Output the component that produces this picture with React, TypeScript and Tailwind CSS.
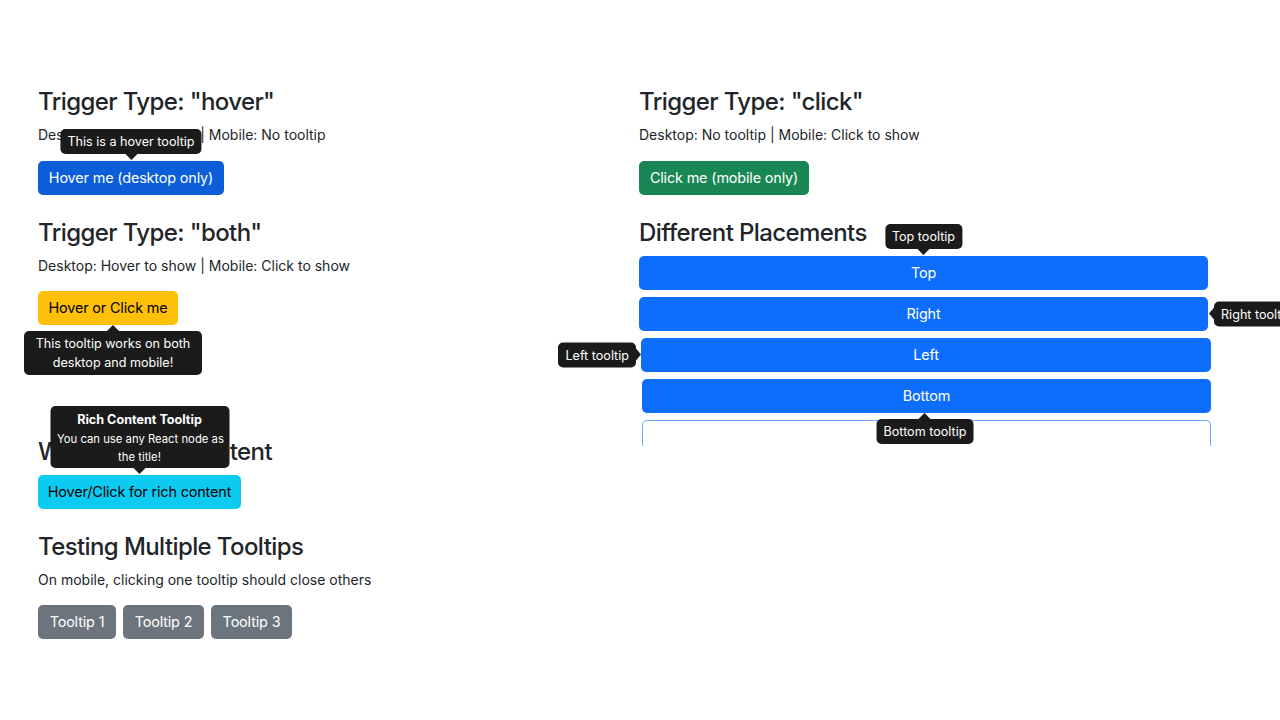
import React from "react"

const font = { fontFamily: "Inter, 'Noto Sans', sans-serif" }

function Arrow({ dir }: { dir: "down" | "up" | "left" | "right" }) {
  if (dir === "down")
    return (
      <span className="absolute top-full left-1/2 -translate-x-1/2 h-0 w-0 border-x-[6px] border-x-transparent border-t-[6px] border-t-[#1b1b1b]" />
    )
  if (dir === "up")
    return (
      <span className="absolute bottom-full left-1/2 -translate-x-1/2 h-0 w-0 border-x-[6px] border-x-transparent border-b-[6px] border-b-[#1b1b1b]" />
    )
  if (dir === "left")
    return (
      <span className="absolute right-full top-1/2 -translate-y-1/2 h-0 w-0 border-y-[6px] border-y-transparent border-r-[5px] border-r-[#1b1b1b]" />
    )
  return (
    <span className="absolute left-full top-1/2 -translate-y-1/2 h-0 w-0 border-y-[6px] border-y-transparent border-l-[5px] border-l-[#1b1b1b]" />
  )
}

const tip = "absolute z-10 rounded-[5px] bg-[#1b1b1b] text-white text-[12.6px] leading-[19px] px-[7px] py-[3px] whitespace-nowrap"
const btn = "h-[34px] rounded-[5px] text-[14.4px] leading-[21.6px] tracking-[-0.01em] flex items-center justify-center"
const h3 = "text-[24px] leading-[30px] font-medium tracking-[-0.025em]"
const para = "text-[14px] leading-[21.6px]"

export default function App() {
  return (
    <div className="min-h-[720px] bg-white text-[#212529] overflow-hidden" style={font}>
      <div className="grid grid-cols-[569px_569px] gap-x-[32px] pl-[38px] pt-[87px]">
        {/* left column */}
        <div className="flex flex-col">
          <h3 className={`${h3} mb-[7px]`}>Trigger Type: "hover"</h3>
          <p className={`${para} mb-[15px]`}>Desktop: Hover to show | Mobile: No tooltip</p>
          <div className="relative w-fit">
            <button className={`${btn} w-[186px] bg-[#0b5ed7] text-white`}>Hover me (desktop only)</button>
            <div className={`${tip} bottom-full mb-[7px] left-1/2 -translate-x-1/2`}>
              This is a hover tooltip
              <Arrow dir="down" />
            </div>
          </div>

          <h3 className={`${h3} mt-[23px] mb-[7px]`}>Trigger Type: "both"</h3>
          <p className={`${para} mb-[15px]`}>Desktop: Hover to show | Mobile: Click to show</p>
          <div className="relative w-fit">
            <button className={`${btn} w-[140px] bg-[#ffc107] text-black`}>Hover or Click me</button>
            <div className={`${tip} top-full mt-[6px] left-[-14px] w-[178px] text-center py-[3px] leading-[18.5px]`}>
              This tooltip works on both
              <br />
              desktop and mobile!
              <Arrow dir="up" />
            </div>
          </div>

          <h3 className={`${h3} mt-[112px] mb-[8px]`}>With Custom Content</h3>
          <div className="relative w-fit">
            <button className={`${btn} w-[203px] bg-[#0dcaf0] text-black`}>Hover/Click for rich content</button>
            <div className={`${tip} bottom-full mb-[7px] left-1/2 -translate-x-1/2 w-[179px] text-center pt-[4px] pb-[2px]`}>
              <div className="font-bold text-[12.6px] leading-[19px] mb-[1px]">Rich Content Tooltip</div>
              <div className="text-[11.3px] leading-[18px]">
                You can use any React node as
                <br />
                the title!
              </div>
              <Arrow dir="down" />
            </div>
          </div>

          <h3 className={`${h3} mt-[23px] mb-[7px]`}>Testing Multiple Tooltips</h3>
          <p className={`${para} mb-[14px]`}>On mobile, clicking one tooltip should close others</p>
          <div className="flex gap-[7px]">
            <button className={`${btn} w-[78px] bg-[#6c757d] text-white`}>Tooltip 1</button>
            <button className={`${btn} w-[81px] bg-[#6c757d] text-white`}>Tooltip 2</button>
            <button className={`${btn} w-[81px] bg-[#6c757d] text-white`}>Tooltip 3</button>
          </div>
        </div>

        {/* right column */}
        <div className="flex flex-col">
          <h3 className={`${h3} mb-[7px]`}>Trigger Type: "click"</h3>
          <p className={`${para} mb-[15px]`}>Desktop: No tooltip | Mobile: Click to show</p>
          <button className={`${btn} w-[170px] bg-[#198754] text-white`}>Click me (mobile only)</button>

          <h3 className={`${h3} mt-[23px] mb-[8px]`}>Different Placements</h3>
          <div className="flex flex-col gap-[7px]">
            <div className="relative">
              <button className={`${btn} w-[569px] bg-[#0d6efd] text-white`}>Top</button>
              <div className={`${tip} bottom-full mb-[7px] left-1/2 -translate-x-1/2`}>
                Top tooltip
                <Arrow dir="down" />
              </div>
            </div>
            <div className="relative">
              <button className={`${btn} w-[569px] bg-[#0d6efd] text-white`}>Right</button>
              <div className={`${tip} left-full ml-[6px] top-1/2 -translate-y-1/2`}>
                Right tooltip
                <Arrow dir="left" />
              </div>
            </div>
            <div className="relative ml-[2px]">
              <button className={`${btn} w-[570px] bg-[#0d6efd] text-white`}>Left</button>
              <div className={`${tip} right-full mr-[5px] top-1/2 -translate-y-1/2`}>
                Left tooltip
                <Arrow dir="right" />
              </div>
            </div>
            <div className="relative ml-[3px]">
              <button className={`${btn} w-[569px] bg-[#0d6efd] text-white`}>Bottom</button>
              <div className={`${tip} top-full mt-[6px] left-1/2 -translate-x-1/2`}>
                Bottom tooltip
                <Arrow dir="up" />
              </div>
            </div>
            <div className="ml-[3px] w-[569px] h-[26px] rounded-t-[5px] border border-b-0 border-[#6ea8fe]" />
          </div>
        </div>
      </div>
    </div>
  )
}
